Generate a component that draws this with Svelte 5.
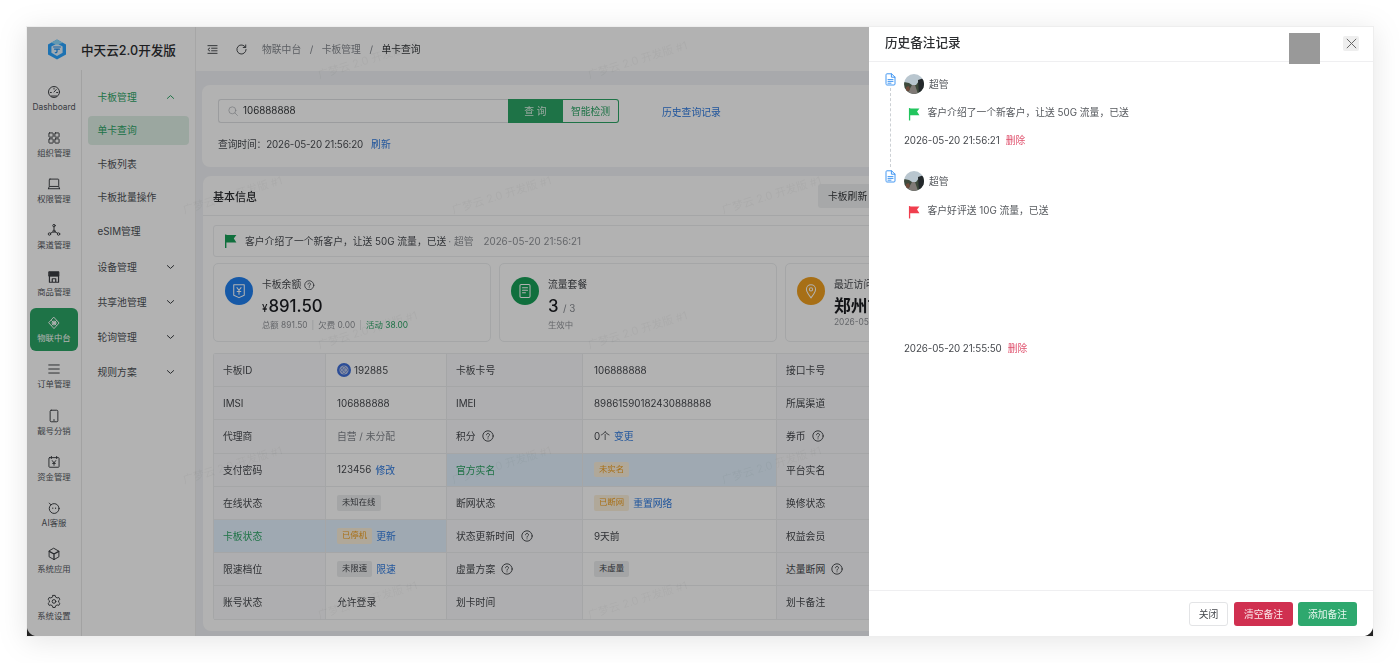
<script>
  const railItems = [
    { label: 'Dashboard', icon: 'dash' },
    { label: '组织管理', icon: 'org' },
    { label: '权限管理', icon: 'laptop' },
    { label: '渠道管理', icon: 'nodes' },
    { label: '商品管理', icon: 'shop' },
    { label: '物联中台', icon: 'iot', active: true },
    { label: '订单管理', icon: 'menu' },
    { label: '靓号分销', icon: 'phone' },
    { label: '资金管理', icon: 'fund' },
    { label: 'AI客服', icon: 'bot' },
    { label: '系统应用', icon: 'cube' },
    { label: '系统设置', icon: 'gear' }
  ];
  const subItems = [
    { label: '卡板管理', group: true, open: true },
    { label: '单卡查询', active: true },
    { label: '卡板列表' },
    { label: '卡板批量操作' },
    { label: 'eSIM管理' },
    { label: '设备管理', group: true },
    { label: '共享池管理', group: true },
    { label: '轮询管理', group: true },
    { label: '规则方案', group: true }
  ];
  const rows = [
    [{ t: '卡板ID' }, { op: true, parts: [{ t: '192885' }] }, { t: '卡板卡号' }, { parts: [{ t: '106888888' }] }, { t: '接口卡号' }],
    [{ t: 'IMSI' }, { parts: [{ t: '106888888' }] }, { t: 'IMEI' }, { parts: [{ t: '89861590182430888888' }] }, { t: '所属渠道' }],
    [{ t: '代理商' }, { parts: [{ t: '自营 / 未分配', k: 'muted' }] }, { t: '积分', help: true }, { parts: [{ t: '0个' }, { t: '变更', k: 'link' }] }, { t: '券币', help: true }],
    [{ t: '支付密码' }, { parts: [{ t: '123456' }, { t: '修改', k: 'link' }] }, { t: '官方实名', hl: true }, { hl: true, parts: [{ t: '未实名', k: 'warn' }] }, { t: '平台实名' }],
    [{ t: '在线状态' }, { parts: [{ t: '未知在线', k: 'tag' }] }, { t: '断网状态' }, { parts: [{ t: '已断网', k: 'warn' }, { t: '重置网络', k: 'link' }] }, { t: '换修状态' }],
    [{ t: '卡板状态', hl: true }, { hl: true, parts: [{ t: '已停机', k: 'warn' }, { t: '更新', k: 'link' }] }, { t: '状态更新时间', help: true }, { parts: [{ t: '9天前' }] }, { t: '权益会员' }],
    [{ t: '限速档位' }, { parts: [{ t: '未限速', k: 'tag' }, { t: '限速', k: 'link' }] }, { t: '虚量方案', help: true }, { parts: [{ t: '未虚量', k: 'tag' }] }, { t: '达量断网', help: true }],
    [{ t: '账号状态' }, { parts: [{ t: '允许登录' }] }, { t: '划卡时间' }, { parts: [] }, { t: '划卡备注' }]
  ];
  const marks = [
    [318, 42], [588, 42],
    [183, 177], [452, 177], [722, 177],
    [318, 312], [588, 312],
    [183, 447], [452, 447], [722, 447],
    [318, 582], [588, 582]
  ];
</script>

{#snippet railIcon(name)}
  <svg class="ricon" viewBox="0 0 16 16" fill="none" stroke="currentColor" stroke-width="1.1" stroke-linecap="round" stroke-linejoin="round">
    {#if name === 'dash'}
      <circle cx="8" cy="8" r="6.3" /><path d="M8 8l2.6-2.8M3.8 8.6h1.2M11 8.6h1.2M8 3.6v1.1M5 12.6h6" />
    {:else if name === 'org'}
      <rect x="2.2" y="2.2" width="4.8" height="4.8" rx=".6" /><rect x="9" y="2.2" width="4.8" height="4.8" rx=".6" /><rect x="2.2" y="9" width="4.8" height="4.8" rx=".6" /><rect x="9" y="9" width="4.8" height="4.8" rx=".6" />
    {:else if name === 'laptop'}
      <rect x="2.6" y="2.4" width="10.8" height="8.4" rx=".8" /><path d="M1.6 13.4h12.8M2.6 10.8l-1 2.6M13.4 10.8l1 2.6" />
    {:else if name === 'nodes'}
      <circle cx="8" cy="3" r="1.4" /><circle cx="2.8" cy="12.6" r="1.4" /><circle cx="13.2" cy="12.6" r="1.4" /><circle cx="8" cy="9.4" r="1.3" /><path d="M8 4.4v3.7M6.9 10.2l-3 1.5M9.1 10.2l3 1.5" />
    {:else if name === 'shop'}
      <path d="M2.4 2h11.2v5H2.4z" fill="currentColor" /><path d="M2.8 7v7h10.4V7M6 14v-4h4v4" stroke-width="1.4" />
    {:else if name === 'iot'}
      <path d="M8 1.6l5.8 6.4L8 14.4 2.2 8z" /><circle cx="8" cy="8" r="2.2" /><path d="M5.2 5.2l5.6 5.6M10.8 5.2l-5.6 5.6" />
    {:else if name === 'menu'}
      <path d="M2 3.4h12M2 8h12M2 12.6h12" />
    {:else if name === 'phone'}
      <rect x="3.6" y="1.4" width="8.8" height="13.2" rx="1.2" /><path d="M7.4 12.6h1.2" />
    {:else if name === 'fund'}
      <rect x="2.2" y="3" width="11.6" height="11" rx=".8" /><path d="M5 1.6V4M11 1.6V4M6 6.4L8 9l2-2.6M8 9v2.8M6.4 9.6h3.2" />
    {:else if name === 'bot'}
      <circle cx="8.2" cy="8.6" r="5.6" /><path d="M2.6 2.4l2 2M6.6 8v.6M9.8 8v.6" />
    {:else if name === 'cube'}
      <path d="M8 1.6l5.6 3.2v6.4L8 14.4l-5.6-3.2V4.8z" /><path d="M2.6 5L8 8l5.4-3M8 8v6.2" stroke-width="1.5" />
    {:else}
      <path d="M6.7 1.6h2.6l.5 1.9 1.8 1 1.9-.5 1.2 2.2-1.4 1.4v1.8l1.4 1.4-1.2 2.2-1.9-.5-1.8 1-.5 1.9H6.7l-.5-1.9-1.8-1-1.9.5-1.2-2.2 1.4-1.4V7.6L1.3 6.2l1.2-2.2 1.9.5 1.8-1z" /><circle cx="8" cy="8.5" r="2.1" />
    {/if}
  </svg>
{/snippet}

{#snippet help()}
  <svg class="help" viewBox="0 0 12 12" fill="none" stroke="currentColor" stroke-width=".9" stroke-linecap="round">
    <circle cx="6" cy="6" r="5.2" /><path d="M4.5 4.8c0-2 3-2 3 0 0 1.2-1.5 1.1-1.5 2.4" /><path d="M6 8.8v.1" />
  </svg>
{/snippet}

{#snippet flag(color)}
  <svg class="flag" viewBox="0 0 13 14" aria-hidden="true">
    <path d="M1 0.6h1.4V14H1z" fill={color} /><path d="M1.6 1h10.8L9.8 4.4 12.4 8.4H1.6z" fill={color} />
  </svg>
{/snippet}

{#snippet avatar()}
  <svg class="avatar" viewBox="0 0 20 20" aria-hidden="true">
    <rect width="20" height="20" fill="#b9c6cf" />
    <path d="M0 8l5 1 3 2 4 0 3-4 5-1v14H0z" fill="#3e4a3c" />
    <path d="M14 6l6-2v16h-5z" fill="#23282b" />
    <path d="M8 11h3l3 9H3z" fill="#7f7a76" />
    <path d="M2 13l3-1 1 4-4 2z" fill="#6e4a3a" />
  </svg>
{/snippet}

{#snippet doc()}
  <svg class="doc" viewBox="0 0 11 13" fill="none" stroke="#2f8cf0" stroke-width=".9" stroke-linejoin="round" stroke-linecap="round">
    <path d="M1 1.8c0-.6.4-1 1-1h4.6L10 4.2V11c0 .6-.4 1-1 1H2c-.6 0-1-.4-1-1z" /><path d="M6.4 1v3.2H10M3 6.6h5M3 8.4h5M3 10.2h3" />
  </svg>
{/snippet}

{#snippet corner(cls)}
  <svg class="corner {cls}" viewBox="0 0 8 8" aria-hidden="true"><path d="M0 0C1 4 4 7 8 8H0z" fill="#222" /></svg>
{/snippet}

<div class="win">
  <aside class="side">
    <div class="logo">
      <svg class="logo-mark" viewBox="0 0 22 22" aria-hidden="true">
        <path d="M11 1.5l9 5v10l-9 5-9-5v-10z" fill="#2aa4ff" />
        <path d="M11 5.4l5.6 3.2v6.2L11 18l-5.6-3.2V8.6z" fill="#e4f4ff" />
        <path d="M7.6 9h6.8M8.6 11.2h4.8M11 11.2v2.4c0 1-.8 1.3-1.7 1.1" stroke="#1f8ff0" stroke-width="1.2" fill="none" stroke-linecap="round" />
        <path d="M11 1.5l6 3.3-6 2-6-2z" fill="#8fdcff" />
      </svg>
      <span class="logo-text">中天云2.0开发版</span>
    </div>
    <div class="side-body">
      <nav class="rail">
        {#each railItems as item}
          <div class="rail-item" class:on={item.active}>
            {@render railIcon(item.icon)}
            <span>{item.label}</span>
          </div>
        {/each}
      </nav>
      <nav class="sub">
        {#each subItems as s}
          <div class="sub-item" class:sel={s.active} class:grp={s.group} class:open={s.open}>
            <span>{s.label}</span>
            {#if s.group}
              <svg class="chev" viewBox="0 0 10 6" fill="none" stroke="currentColor" stroke-width="1.1" stroke-linecap="round" stroke-linejoin="round">
                {#if s.open}<path d="M1.5 4.6L5 1.4l3.5 3.2" />{:else}<path d="M1.5 1.4L5 4.6l3.5-3.2" />{/if}
              </svg>
            {/if}
          </div>
        {/each}
      </nav>
    </div>
  </aside>

  <main class="main">
    {#each marks as m}
      <span class="mark" style="left:{m[0] - 196}px;top:{m[1] - 27}px">广梦云 2.0 开发版 #1</span>
    {/each}

    <header class="top">
      <svg class="top-ic" viewBox="0 0 12 12" fill="none" stroke="currentColor" stroke-width="1" stroke-linecap="round"><path d="M1 1.8h10M5 4.6h6M5 7.4h6M1 10.2h10M3 4.4L1 6l2 1.6" /></svg>
      <svg class="top-ic refresh" viewBox="0 0 12 12" fill="none" stroke="currentColor" stroke-width="1" stroke-linecap="round" stroke-linejoin="round"><path d="M10.4 3.6A5 5 0 1 0 11 6" /><path d="M10.6 1v2.8H7.9" /></svg>
      <div class="crumbs">
        <span>物联中台</span><i>/</i><span>卡板管理</span><i>/</i><span class="cur">单卡查询</span>
      </div>
    </header>

    <div class="content">
      <section class="search-card">
        <div class="search-row">
          <div class="input">
            <svg class="search-ic" viewBox="0 0 12 12" fill="none" stroke="currentColor" stroke-width=".8" stroke-linecap="round"><circle cx="5.2" cy="5.2" r="4.2" /><path d="M8.4 8.4l3 3" /></svg>
            <span>106888888</span>
          </div>
          <div class="btn-query">查 询</div>
          <div class="btn-check">智能检测</div>
          <span class="history">历史查询记录</span>
        </div>
        <div class="qtime">查询时间：2026-05-20 21:56:20<span class="link refresh-link">刷新</span></div>
      </section>

      <section class="info">
        <div class="info-head">
          <h2>基本信息</h2>
          <div class="btn-gray">卡板刷新</div>
        </div>
        <div class="info-body">
          <div class="notice">
            {@render flag('#18a058')}
            <span class="notice-text">客户介绍了一个新客户，让送 50G 流量，已送</span>
            <span class="notice-dim">· 超管</span>
            <span class="notice-dim time">2026-05-20 21:56:21</span>
          </div>

          <div class="stats">
            <div class="stat">
              <div class="circle blue">
                <svg viewBox="0 0 14 14" fill="none" stroke="#fff" stroke-width=".9" stroke-linecap="round" stroke-linejoin="round"><path d="M2.4 1.6h9.2v9.2L7 12.8l-4.6-2z" /><path d="M5.2 4L7 6.4 8.8 4M7 6.4v3.4M5.4 7.4h3.2" /></svg>
              </div>
              <div class="stat-main">
                <div class="stat-title">卡板余额 {@render help()}</div>
                <div class="stat-val"><small>¥</small>891.50</div>
                <div class="stat-sub">总额 891.50<b>|</b>欠费 0.00<b>|</b><em>活动 38.00</em></div>
              </div>
            </div>
            <div class="stat">
              <div class="circle green">
                <svg viewBox="0 0 14 14" fill="none" stroke="#fff" stroke-width=".9" stroke-linecap="round" stroke-linejoin="round"><rect x="2.6" y="1.4" width="8.8" height="11.2" rx="1" /><path d="M4.8 4.2h4.4M4.8 6.4h4.4M4.8 8.6h2.6" /></svg>
              </div>
              <div class="stat-main">
                <div class="stat-title">流量套餐</div>
                <div class="stat-val">3 <span class="of">/ 3</span></div>
                <div class="stat-sub">生效中</div>
              </div>
            </div>
            <div class="stat">
              <div class="circle orange">
                <svg viewBox="0 0 14 14" fill="none" stroke="#fff" stroke-width=".9" stroke-linejoin="round"><path d="M7 13C4.6 10 3 7.8 3 5.6a4 4 0 0 1 8 0C11 7.8 9.4 10 7 13z" /><circle cx="7" cy="5.6" r="1.4" /></svg>
              </div>
              <div class="stat-main">
                <div class="stat-title">最近访问</div>
                <div class="stat-val cjk">郑州市</div>
                <div class="stat-sub">2026-05-20 21:56:20</div>
              </div>
            </div>
          </div>

          <div class="grid">
            {#each rows as row}
              {#each row as cell, i}
                {#if cell.parts}
                  <div class="cell val" class:hl={cell.hl}>
                    {#if cell.op}
                      <svg class="op" viewBox="0 0 14 14" aria-hidden="true"><circle cx="7" cy="7" r="7" fill="#3f6fd8" /><circle cx="7" cy="7" r="4.6" fill="#b9c6e8" /><path d="M3 7l4-4 4 4-4 4zM5 9l4-5M5 5l4 5" stroke="#6f8fd8" stroke-width=".8" fill="none" /></svg>
                    {/if}
                    {#each cell.parts as p}
                      <span class={p.k}>{p.t}</span>
                    {/each}
                  </div>
                {:else}
                  <div class="cell lab" class:hl={cell.hl}>
                    <span>{cell.t}</span>
                    {#if cell.help}{@render help()}{/if}
                  </div>
                {/if}
                {#if i === 4}<div class="cell val"></div>{/if}
              {/each}
            {/each}
          </div>
        </div>
      </section>
    </div>
  </main>

  <div class="overlay"></div>

  <aside class="drawer">
    <div class="d-head">
      <h3>历史备注记录</h3>
      <div class="gray-box"></div>
      <div class="close">
        <svg viewBox="0 0 10 10" fill="none" stroke="#666" stroke-width=".9" stroke-linecap="round"><path d="M1 1l8 8M9 1l-8 8" /></svg>
      </div>
    </div>
    <div class="d-body">
      <article class="note first">
        <div class="note-rail">{@render doc()}<span class="dash"></span></div>
        <div class="note-main">
          <div class="who">{@render avatar()}<span>超管</span></div>
          <div class="note-line">{@render flag('#22c55e')}<span>客户介绍了一个新客户，让送 50G 流量，已送</span></div>
          <div class="note-time">2026-05-20 21:56:21<span class="del">删除</span></div>
        </div>
      </article>
      <article class="note second">
        <div class="note-rail">{@render doc()}</div>
        <div class="note-main">
          <div class="who">{@render avatar()}<span>超管</span></div>
          <div class="note-line">{@render flag('#f03e4e')}<span>客户好评送 10G 流量，已送</span></div>
          <div class="note-time far">2026-05-20 21:55:50<span class="del">删除</span></div>
        </div>
      </article>
    </div>
    <div class="d-foot">
      <div class="fbtn plain">关闭</div>
      <div class="fbtn red">清空备注</div>
      <div class="fbtn grn">添加备注</div>
    </div>
  </aside>

  {@render corner('bl')}
  {@render corner('br')}
</div>

<style>
  :global(body) {
    margin: 0;
    background: #fff;
    font-family: Inter, "Noto Sans CJK SC", sans-serif;
    overflow: hidden;
  }
  :global(#app) { filter: drop-shadow(0 4px 14px rgba(0, 0, 0, .1)); }
  .win {
    position: relative;
    display: flex;
    width: 1346px;
    height: 609px;
    margin: 27px;
    background: #fff;
    overflow: hidden;
    font-size: 9.8px;
    color: #333639;
    box-shadow: 0 0 0 1px #eee;
  }

  .side { width: 168px; flex: none; display: flex; flex-direction: column; background: #fff; }
  .logo { height: 43px; display: flex; align-items: center; padding-left: 19px; gap: 13px; flex: none; }
  .logo-mark { width: 22px; height: 22px; }
  .logo-text { font-size: 12.6px; font-weight: 500; color: #2b2d30; padding-top: 2px; }
  .side-body { flex: 1; display: flex; min-height: 0; }

  .rail { width: 55px; box-sizing: border-box; border-right: 1px solid #e8e8e8; padding: 7px 3px 0; display: flex; flex-direction: column; gap: 3.3px; flex: none; }
  .rail-item { height: 43px; flex: none; border-radius: 6px; display: flex; flex-direction: column; align-items: center; justify-content: center; gap: 3px; font-size: 8.4px; color: #54585e; line-height: 11px; }
  .rail-item .ricon { width: 14px; height: 14px; color: #3a3d42; }
  .rail-item.on { background: #2ca566; color: #fff; }
  .rail-item.on .ricon { color: #fff; }

  .sub { flex: 1; padding: 12.5px 6px 0 5.5px; box-sizing: border-box; }
  .sub-item { height: 29px; margin-bottom: 4.6px; border-radius: 4px; padding: 0 14px 0 10px; display: flex; align-items: center; justify-content: space-between; color: #4c5055; }
  .sub-item.grp { margin-bottom: 6px; }
  .sub-item:not(.grp) + .grp { margin-top: 7px; }
  .sub-item.open { color: #2ca566; margin-bottom: 4px; }
  .sub-item.sel { background: #dff0e6; color: #2ca566; }
  .chev { width: 9px; height: 6px; color: #3a3d42; }
  .open .chev { color: #2ca566; }

  .main { position: relative; flex: 1; min-width: 0; display: flex; flex-direction: column; border-left: 1px solid #eee; }
  .top { height: 44px; flex: none; display: flex; align-items: center; padding-left: 11px; background: #fff; }
  .top-ic { width: 11px; height: 11px; color: #3a3d42; }
  .top-ic.refresh { margin-left: 18px; }
  .crumbs { margin-left: 15px; display: flex; align-items: center; color: #85898f; }
  .crumbs i { font-style: normal; margin: 0 8.5px; }
  .crumbs .cur { color: #333639; }

  .content { flex: 1; min-height: 0; background: #f1f3f6; padding: 14px 7px 0 6px; }
  .mark { position: absolute; white-space: nowrap; transform: rotate(-17deg); transform-origin: left center; font-size: 11px; line-height: 14px; color: rgba(0, 0, 0, .04); margin-top: 26px; z-index: 3; pointer-events: none; }

  .search-card { background: #fff; border-radius: 8px; height: 82px; box-sizing: border-box; padding: 14px 16px 0; }
  .search-row { display: flex; align-items: stretch; height: 24px; }
  .input { width: 290px; box-sizing: border-box; border: 1px solid #dfe0e3; border-right: 0; border-radius: 3px 0 0 3px; display: flex; align-items: center; padding: 0 0 1px 9px; gap: 5px; color: #333639; }
  .search-ic { width: 10px; height: 10px; color: #a8abb0; }
  .btn-query { width: 55px; background: #2ca566; color: #dff3e8; display: flex; align-items: center; justify-content: center; }
  .btn-check { width: 56px; box-sizing: border-box; border: 1px solid #2ca566; border-left: 0; border-radius: 0 3px 3px 0; color: #2ca566; display: flex; align-items: center; justify-content: center; }
  .history { margin-left: 43px; align-self: center; color: #2f7be0; margin-top: 1px; }
  .qtime { margin-top: 15px; line-height: 14px; color: #4a4d52; letter-spacing: -.15px; }
  .link { color: #2f7be0; }
  .refresh-link { margin-left: 8px; letter-spacing: 0; }

  .info { background: #fff; border-radius: 8px; margin: 9px 0 0 1px; height: 455px; box-sizing: border-box; }
  .info-head { height: 40px; box-sizing: border-box; border-bottom: 1px solid #eceef0; display: flex; align-items: center; padding: 0 10px; }
  .info-head h2 { margin: 0; width: 605px; font-size: 11px; font-weight: 500; color: #2b2d30; flex: none; }
  .btn-gray { background: #f0f1f2; border-radius: 3px; height: 24px; padding: 0 10px; display: flex; align-items: center; white-space: nowrap; flex: none; }
  .info-body { padding: 9px 10px 0; }

  .notice { height: 32px; box-sizing: border-box; border: 1px solid #eceef0; border-radius: 3px; display: flex; align-items: center; padding-left: 10px; }
  .flag { width: 13px; height: 14px; flex: none; }
  .notice-text { margin-left: 8px; color: #4a4d52; }
  .notice-dim { margin-left: 2px; color: #909398; }
  .notice-dim.time { margin-left: 10px; }

  .stats { display: grid; grid-template-columns: 278px 278px 278px 278px; gap: 8px; margin-top: 6px; }
  .stat { height: 79px; box-sizing: border-box; border: 1px solid #eceef0; border-radius: 5px; padding: 13px 12px 13px 11px; display: flex; gap: 9px; }
  .stat-main { padding-top: 1px; }
  .circle { width: 28px; height: 28px; border-radius: 50%; flex: none; display: flex; align-items: center; justify-content: center; }
  .circle svg { width: 16px; height: 16px; }
  .blue { background: #2080f0; }
  .green { background: #18a058; }
  .orange { background: #f0a020; }
  .stat-title { line-height: 14px; display: flex; align-items: center; gap: 3px; color: #45484d; }
  .stat-val { font-size: 16.8px; line-height: 22px; font-weight: 500; color: #1a1c20; margin-top: 3px; white-space: nowrap; }
  .stat-val small { font-size: 9.8px; margin-right: 1px; }
  .stat-val.cjk { font-weight: 600; }
  .of { font-size: 9.8px; font-weight: 400; color: #85898f; }
  .stat-sub { font-size: 8.4px; line-height: 12px; margin-top: -1px; color: #909398; white-space: nowrap; }
  .stat-sub b { font-weight: 400; margin: 0 4px; color: #d6d8db; }
  .stat-sub em { font-style: normal; color: #2ca566; }
  .help { width: 10.5px; height: 10.5px; color: #3a3d42; flex: none; }

  .grid { display: grid; grid-template-columns: 112px 121px 136px 194px 112px 1fr; grid-auto-rows: 33.2px; margin-top: 11px; border: 1px solid #eceef0; border-width: 1px 0 0 1px; border-radius: 3px; }
  .cell { box-sizing: border-box; border-right: 1px solid #eceef0; border-bottom: 1px solid #eceef0; display: flex; align-items: center; min-width: 0; white-space: nowrap; }
  .lab { background: #fafafc; padding-left: 9px; gap: 6px; color: #45484d; }
  .lab .help { width: 12px; height: 12px; }
  .val { padding-left: 11px; gap: 4px; color: #45484d; }
  .hl, .lab.hl { background: #e4f3ff; }
  .lab.hl { color: #2ca566; }
  .op { width: 14px; height: 14px; margin-right: -1px; flex: none; }
  .muted { color: #85898f; }
  .tag, .warn { font-size: 8.4px; line-height: 15.5px; padding: 0 5px; border-radius: 2px; }
  .tag { background: #ebecee; color: #45484d; }
  .warn { background: #fdf1dc; color: #f0a020; }

  .overlay { position: absolute; inset: 0; background: rgba(0, 0, 0, .3); z-index: 10; }

  .drawer { position: absolute; top: 0; right: 0; bottom: 0; width: 504px; background: #fff; z-index: 11; display: flex; flex-direction: column; }
  .d-head { height: 35px; flex: none; box-sizing: border-box; border-bottom: 1px solid #efeff1; display: flex; align-items: center; padding: 0 0 5px 16px; position: relative; }
  .d-head h3 { margin: 0; font-size: 12.6px; font-weight: 500; color: #2b2d30; }
  .gray-box { position: absolute; left: 420px; top: 6px; width: 31px; height: 31px; background: #999; z-index: 1; }
  .close { position: absolute; left: 474px; top: 9px; width: 16px; height: 15px; border-radius: 2px; background: #eee; display: flex; align-items: center; justify-content: center; }
  .close svg { width: 11px; height: 11px; }

  .d-body { flex: 1; min-height: 0; padding: 11px 16px 0; }
  .note { display: flex; }
  .note.first { height: 97px; }
  .note-rail { width: 19px; flex: none; display: flex; flex-direction: column; align-items: flex-start; }
  .doc { width: 11px; height: 13px; flex: none; }
  .dash { height: 79px; width: 0; margin-left: 5px; margin-top: 2px; border-left: 1px dashed #ccd0d4; }
  .who { display: flex; align-items: center; gap: 5px; height: 20px; margin-top: 1px; color: #55585d; }
  .avatar { width: 20px; height: 20px; border-radius: 50%; flex: none; }
  .note-line { display: flex; align-items: center; margin-top: 11px; padding-left: 3.5px; gap: 8px; height: 14px; color: #55585d; white-space: nowrap; }
  .note-line .flag { width: 12px; margin-top: 4px; }
  .note-time { margin-top: 15px; line-height: 14px; color: #45484d; letter-spacing: -.1px; }
  .note-time.far { margin-top: 125px; }
  .second .note-line { margin-top: 12px; }
  .del { color: #e0526e; margin-left: 6px; letter-spacing: 0; }

  .d-foot { height: 46px; flex: none; box-sizing: border-box; border-top: 1px solid #efeff1; display: flex; justify-content: flex-end; padding: 11px 16px 0 0; gap: 5px; }
  .fbtn { height: 24px; box-sizing: border-box; border-radius: 3px; display: flex; align-items: center; justify-content: center; width: 59px; }
  .plain { width: 39px; border: 1px solid #e3e4e6; color: #45484d; margin-right: 1px; }
  .red { background: #d03050; color: #fbe7ea; }
  .grn { background: #2ea86e; color: #e6f6ed; }

  .corner { position: absolute; bottom: 0; width: 8px; height: 8px; z-index: 12; }
  .corner.bl { left: 0; }
  .corner.br { right: 0; transform: scaleX(-1); }
</style>
